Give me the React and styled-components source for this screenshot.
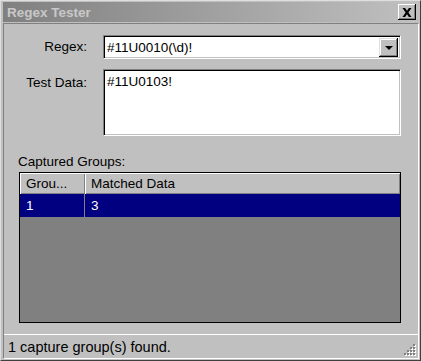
import React from 'react'
import styled, { createGlobalStyle } from 'styled-components'

const Global = createGlobalStyle`
  html, body {
    margin: 0;
    padding: 0;
    background: #c0c0c0;
  }
  * {
    box-sizing: border-box;
  }
`

const Window = styled.div`
  width: 421px;
  height: 361px;
  display: flex;
  flex-direction: column;
  padding: 1px 1px 1px 2px;
  background: #c0c0c0;
  border: 1px solid;
  border-color: #dfdfdf #404040 #404040 #dfdfdf;
  font-family: "Liberation Sans", Arial, sans-serif;
  font-size: 13.5px;
  color: #000;
`

const TitleBar = styled.div`
  height: 20px;
  display: flex;
  align-items: center;
  justify-content: space-between;
  padding: 0 3px 0 4px;
  background: linear-gradient(to right, #808080, #c0c0c0);
`

const Title = styled.span`
  font-size: 13.5px;
  font-weight: bold;
  color: #c8c8c8;
`

const CloseButton = styled.div`
  width: 18px;
  height: 16px;
  display: flex;
  align-items: center;
  justify-content: center;
  background: #c0c0c0;
  box-shadow: inset -1px -1px #000, inset 1px 1px #fff, inset -2px -2px #808080;
`

const Client = styled.div`
  flex: 1;
  display: flex;
  flex-direction: column;
  margin-top: 1px;
  border: 1px solid;
  border-color: #808080 #fff #fff #808080;
`

const Content = styled.div`
  padding: 11px 17px 0 15px;
  display: flex;
  flex-direction: column;
`

const FormGrid = styled.div`
  display: grid;
  grid-template-columns: 68px 1fr;
  column-gap: 16px;
  row-gap: 10px;
`

const Label = styled.div`
  text-align: right;
  padding-top: ${p => p.$top || 4}px;
`

const Sunken = styled.div`
  background: #fff;
  border: 1px solid;
  border-color: #808080 #fff #fff #808080;
  box-shadow: inset 1px 1px #000, inset -1px -1px #c0c0c0;
`

const Combo = styled(Sunken)`
  height: 24px;
  display: flex;
  align-items: center;
  justify-content: space-between;
  padding: 2px 2px 2px 3px;
`

const DropButton = styled.div`
  width: 19px;
  height: 19px;
  display: flex;
  align-items: center;
  justify-content: center;
  background: #c0c0c0;
  box-shadow: inset -1px -1px #000, inset 1px 1px #dfdfdf, inset -2px -2px #808080, inset 2px 2px #fff;
`

const Arrow = styled.div`
  width: 0;
  height: 0;
  border-left: 4px solid transparent;
  border-right: 4px solid transparent;
  border-top: 4px solid #000;
  margin-top: 1px;
`

const TextArea = styled(Sunken)`
  height: 67px;
  padding: 4px 3px;
`

const GroupLabel = styled.div`
  line-height: 16px;
  margin: 18px 0 2px -1px;
`

const ListView = styled.div`
  height: 151px;
  display: flex;
  flex-direction: column;
  background: #808080;
  border: 1px solid #000;
`

const HeaderRow = styled.div`
  display: grid;
  grid-template-columns: 65px 1fr;
  height: 21px;
  background: #c0c0c0;
`

const HeaderCell = styled.div`
  display: flex;
  align-items: center;
  padding-left: 6px;
  box-shadow: inset 1px 1px #fff, inset -1px -1px #808080;
`

const Row = styled.div`
  display: grid;
  grid-template-columns: 65px 1fr;
  height: 23px;
  background: ${p => (p.$selected ? '#000080' : 'transparent')};
  color: ${p => (p.$selected ? '#fff' : '#000')};
`

const Cell = styled.div`
  display: flex;
  align-items: center;
  padding-left: 6px;
  border-right: 1px solid ${p => (p.$divider ? '#808080' : 'transparent')};
`

const StatusBar = styled.div`
  margin-top: auto;
  height: 24px;
  display: flex;
  align-items: center;
  justify-content: space-between;
  padding: 0 2px 0 4px;
  border-top: 1px solid #fff;
  font-size: 14.5px;
`

const Grip = styled.svg`
  align-self: flex-end;
  margin-bottom: 2px;
`

const gripDots = [
  [9, 0], [6, 3], [9, 3], [3, 6], [6, 6], [9, 6], [0, 9], [3, 9], [6, 9], [9, 9]
]

const App = () => {
  return (
    <>
      <Global />
      <Window>
        <TitleBar>
          <Title>Regex Tester</Title>
          <CloseButton>
            <svg width="10" height="9" viewBox="0 0 10 9">
              <path d="M0.5 0h2.6l1.9 2.8L6.9 0h2.6L6.4 4.5 9.5 9H6.9L5 6.2 3.1 9H0.5l3.1-4.5z" fill="#000" />
            </svg>
          </CloseButton>
        </TitleBar>
        <Client>
          <Content>
            <FormGrid>
              <Label>Regex:</Label>
              <Combo>
                <span>#11U0010(\d)!</span>
                <DropButton>
                  <Arrow />
                </DropButton>
              </Combo>
              <Label $top={6}>Test Data:</Label>
              <TextArea>#11U0103!</TextArea>
            </FormGrid>
            <GroupLabel>Captured Groups:</GroupLabel>
            <ListView>
              <HeaderRow>
                <HeaderCell>Grou...</HeaderCell>
                <HeaderCell>Matched Data</HeaderCell>
              </HeaderRow>
              <Row $selected>
                <Cell $divider>1</Cell>
                <Cell>3</Cell>
              </Row>
            </ListView>
          </Content>
          <StatusBar>
            <span>1 capture group(s) found.</span>
            <Grip width="12" height="12" viewBox="0 0 12 12">
              {gripDots.map(([x, y]) => (
                <g key={`${x}-${y}`}>
                  <rect x={x + 1} y={y + 1} width="2" height="2" fill="#fff" />
                  <rect x={x} y={y} width="2" height="2" fill="#808080" />
                </g>
              ))}
            </Grip>
          </StatusBar>
        </Client>
      </Window>
    </>
  )
}

export default App
